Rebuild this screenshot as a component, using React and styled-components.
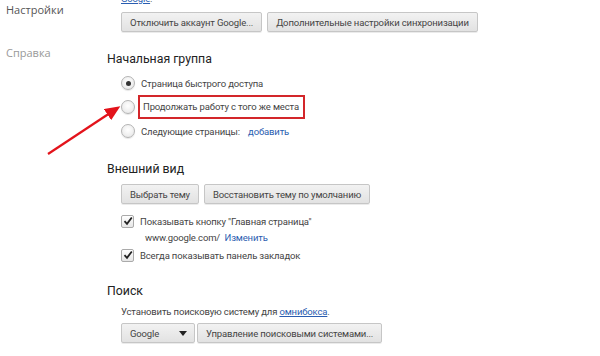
import React from "react";
import styled, { createGlobalStyle } from "styled-components";

const Global = createGlobalStyle`
  html, body { margin: 0; padding: 0; background: #fff; }
  body { font-family: Roboto, "Open Sans", "Noto Sans", sans-serif; color: #333; overflow: hidden; }
  #root { width: 600px; height: 356px; overflow: hidden; position: relative; }
`;

const Page = styled.div`
  display: grid;
  grid-template-columns: 107px 1fr;
  height: 356px;
  position: relative;
`;

const Nav = styled.nav`
  display: flex;
  flex-direction: column;
  gap: 27px;
  padding: 2px 0 0 6px;
`;

const NavItem = styled.div`
  font-family: "Open Sans", "Noto Sans", sans-serif;
  font-size: 11px;
  line-height: 16px;
  color: ${(p) => (p.$active ? "#555" : "#999")};
`;

const Main = styled.main`
  display: flex;
  flex-direction: column;
  margin-top: -9px;
`;

const Section = styled.section`
  display: flex;
  flex-direction: column;
  margin-bottom: ${(p) => p.$mb || 0}px;
`;

const Title = styled.h3`
  margin: 0 0 ${(p) => p.$mb || 8}px;
  font-weight: normal;
  font-size: 12.3px;
  line-height: 18px;
  color: #222;
`;

const Body = styled.div`
  display: flex;
  flex-direction: column;
  padding-left: 14px;
  font-size: 9.5px;
  letter-spacing: -0.15px;
`;

const Link = styled.a`
  color: #2a5db0;
  text-decoration: ${(p) => (p.$u ? "underline" : "none")};
  cursor: pointer;
`;

const Text = styled.div`
  line-height: 16px;
  color: #444;
  padding-left: ${(p) => p.$indent || 0}px;
  margin-bottom: ${(p) => p.$mb || 0}px;
`;

const ButtonRow = styled.div`
  display: flex;
  gap: ${(p) => p.$gap ?? 5}px;
  margin-bottom: ${(p) => p.$mb || 0}px;
`;

const Button = styled.button`
  height: 20px;
  padding: 0 ${(p) => p.$pr ?? 8}px 0 8px;
  border: 1px solid #c6c6c6;
  border-radius: 2px;
  background: linear-gradient(#f2f2f2, #e2e2e2);
  box-shadow: 0 1px 0 rgba(0,0,0,0.08);
  font-family: inherit;
  font-size: inherit;
  letter-spacing: inherit;
  color: #444;
  display: flex;
  align-items: center;
  gap: 20px;
`;

const Caret = styled.span`
  width: 0;
  height: 0;
  border-left: 4px solid transparent;
  border-right: 4px solid transparent;
  border-top: 5px solid #222;
`;

const OptList = styled.div`
  display: flex;
  flex-direction: column;
  gap: 6px;
`;

const Opt = styled.label`
  display: flex;
  align-items: center;
  gap: 6px;
  height: 18px;
  color: #444;
`;

const Radio = styled.span`
  width: 12px;
  height: 12px;
  border-radius: 50%;
  border: 1px solid #b4b4b4;
  background: radial-gradient(circle at 50% 40%, #ffffff, #e4e4e4);
  box-shadow: 0 1px 1px rgba(0,0,0,0.1);
  display: flex;
  align-items: center;
  justify-content: center;
  flex: none;
  &::after {
    content: "";
    width: 5px;
    height: 5px;
    border-radius: 50%;
    background: ${(p) => (p.$on ? "#333" : "transparent")};
  }
`;

const Check = styled.span`
  width: 11px;
  height: 11px;
  border: 1px solid #aaa;
  border-radius: 2px;
  background: linear-gradient(#fff, #e6e6e6);
  flex: none;
  display: flex;
  align-items: center;
  justify-content: center;
`;

const Marked = styled.span`
  border: 2px solid #d3262a;
  padding: 2px 4px 2px 3px;
  margin-left: -3px;
  line-height: 16px;
`;

const Arrow = styled.svg`
  position: absolute;
  left: 0;
  top: 0;
  pointer-events: none;
`;

const Tick = () => (
  <svg width="10" height="10" viewBox="0 0 10 10">
    <path d="M1.5 5.2 L4 7.8 L8.8 1.5" fill="none" stroke="#222" strokeWidth="1.8" />
  </svg>
);

export default function App() {
  return (
    <>
      <Global />
      <Page>
        <Nav>
          <NavItem $active>Настройки</NavItem>
          <NavItem>Справка</NavItem>
        </Nav>
        <Main>
          <Section $mb={18}>
            <Body>
              <Text $mb={5}><Link $u>Google</Link>.</Text>
              <ButtonRow>
                <Button>Отключить аккаунт Google...</Button>
                <Button>Дополнительные настройки синхронизации</Button>
              </ButtonRow>
            </Body>
          </Section>
          <Section $mb={20}>
            <Title $mb={6}>Начальная группа</Title>
            <Body>
              <OptList>
                <Opt><Radio $on />Страница быстрого доступа</Opt>
                <Opt><Radio /><Marked>Продолжать работу с того же места</Marked></Opt>
                <Opt><Radio />Следующие страницы:&nbsp;<Link>добавить</Link></Opt>
              </OptList>
            </Body>
          </Section>
          <Section $mb={18}>
            <Title $mb={6}>Внешний вид</Title>
            <Body>
              <ButtonRow $mb={8}>
                <Button>Выбрать тему</Button>
                <Button>Восстановить тему по умолчанию</Button>
              </ButtonRow>
              <Opt><Check><Tick /></Check>Показывать кнопку "Главная страница"</Opt>
              <Text $indent={24}>www.google.com/&nbsp;&nbsp;<Link>Изменить</Link></Text>
              <Opt><Check><Tick /></Check>Всегда показывать панель закладок</Opt>
            </Body>
          </Section>
          <Section>
            <Title $mb={4}>Поиск</Title>
            <Body>
              <Text $mb={3}>Установить поисковую систему для <Link $u>омнибокса</Link>.</Text>
              <ButtonRow $gap={2}>
                <Button $pr={7}>Google<Caret /></Button>
                <Button>Управление поисковыми системами...</Button>
              </ButtonRow>
            </Body>
          </Section>
        </Main>
        <Arrow width="600" height="356">
          <defs>
            <marker id="ah" markerWidth="7" markerHeight="6" refX="3" refY="3" orient="auto">
              <path d="M0 0 L7 3 L0 6 Z" fill="#e3131b" />
            </marker>
          </defs>
          <line x1="48" y1="154" x2="113" y2="111" stroke="#e3131b" strokeWidth="2.2" markerEnd="url(#ah)" />
        </Arrow>
      </Page>
    </>
  );
}
